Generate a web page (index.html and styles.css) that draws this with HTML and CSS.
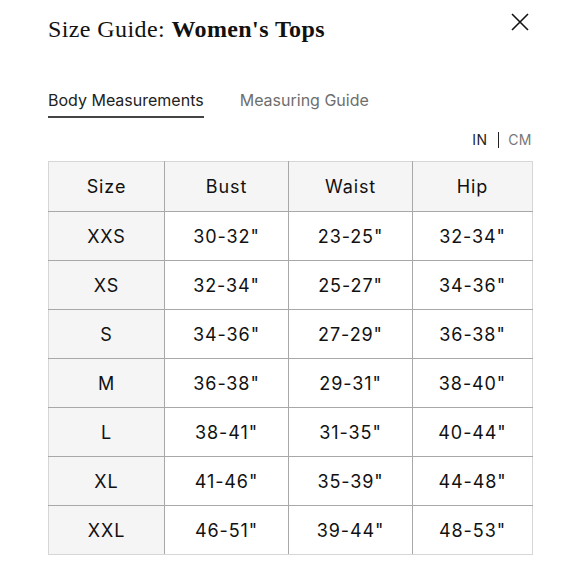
FILE: index.html
```html
<!DOCTYPE html>
<html lang="en">
<head>
<meta charset="utf-8">
<title>Size Guide: Women's Tops</title>
<link rel="stylesheet" href="styles.css">
</head>
<body>
<div class="sheet">
  <header class="head">
    <h1 class="title">Size Guide: <b>Women's Tops</b></h1>
    <button class="close" aria-label="Close">
      <svg width="24" height="24" viewBox="0 0 24 24"><path d="M4 4L20 20M20 4L4 20" stroke="#111" stroke-width="1.6" fill="none"/></svg>
    </button>
  </header>
  <nav class="tabs">
    <span class="tab active">Body Measurements</span>
    <span class="tab">Measuring Guide</span>
  </nav>
  <div class="units"><span class="unit on">IN</span><span class="sep"></span><span class="unit off">CM</span></div>
  <table class="chart">
    <colgroup><col class="c1"><col class="c2"><col class="c3"><col class="c4"></colgroup>
    <thead>
      <tr><th>Size</th><th>Bust</th><th>Waist</th><th>Hip</th></tr>
    </thead>
    <tbody>
      <tr><th>XXS</th><td>30-32"</td><td>23-25"</td><td>32-34"</td></tr>
      <tr><th>XS</th><td>32-34"</td><td>25-27"</td><td>34-36"</td></tr>
      <tr><th>S</th><td>34-36"</td><td>27-29"</td><td>36-38"</td></tr>
      <tr><th>M</th><td>36-38"</td><td>29-31"</td><td>38-40"</td></tr>
      <tr><th>L</th><td>38-41"</td><td>31-35"</td><td>40-44"</td></tr>
      <tr><th>XL</th><td>41-46"</td><td>35-39"</td><td>44-48"</td></tr>
      <tr><th>XXL</th><td>46-51"</td><td>39-44"</td><td>48-53"</td></tr>
    </tbody>
  </table>
</div>
</body>
</html>
```

FILE: styles.css
```css
* { box-sizing: border-box; }
html, body { margin: 0; padding: 0; background: #fff; }
body { font-family: Inter, "Noto Sans", sans-serif; color: #111; }

.sheet { padding: 10px 48px 0 48px; }

.head { display: flex; justify-content: space-between; align-items: flex-start; }
.title {
  margin: 5px 0 0 0;
  font-family: "Liberation Serif", "DejaVu Serif", serif;
  font-weight: 400;
  font-size: 24px;
  line-height: 28px;
  letter-spacing: 0.4px;
  color: #111;
}
.title b { font-weight: 700; }
.close {
  width: 24px; height: 24px; padding: 0; margin: 0;
  border: 0; background: none; display: block;
}
.close svg { display: block; }

.tabs { display: flex; gap: 36px; margin-top: 47px; }
.tab {
  font-size: 16px;
  line-height: 20px;
  padding-bottom: 6px;
  color: #6e6e6e;
  border-bottom: 2px solid transparent;
}
.tab.active { color: #222; border-bottom-color: #444; }

.units {
  display: flex; justify-content: flex-end; align-items: center;
  margin-top: 13px; font-size: 14px; line-height: 17px; letter-spacing: 0.5px;
}
.unit.on { color: #222; }
.unit.off { color: #777; }
.sep { width: 1.6px; height: 16px; background: #222; margin: 0 9px 0 10px; }

.chart {
  margin-top: 13px;
  width: 484px;
  table-layout: fixed;
  border-collapse: collapse;
  border: 1px solid #d6d6d6;
}
.c1 { width: 116px; }
.c2 { width: 124px; }
.c3 { width: 124px; }
.c4 { width: 120px; }
.chart th, .chart td {
  height: 49px;
  padding: 0;
  text-align: center;
  vertical-align: middle;
  font-weight: 400;
  font-size: 18px;
  letter-spacing: 0.9px;
  color: #111;
  border: 1px solid #a8a8a8;
}
.chart thead th { height: 50px; background: #f5f5f5; }
.chart tbody th { background: #f5f5f5; }
.chart tr > :first-child { border-left-color: #d6d6d6; }
.chart tr > :last-child { border-right-color: #d6d6d6; }
.chart thead th { border-top-color: #d6d6d6; }
.chart tbody tr:last-child > * { border-bottom-color: #d6d6d6; }
```
